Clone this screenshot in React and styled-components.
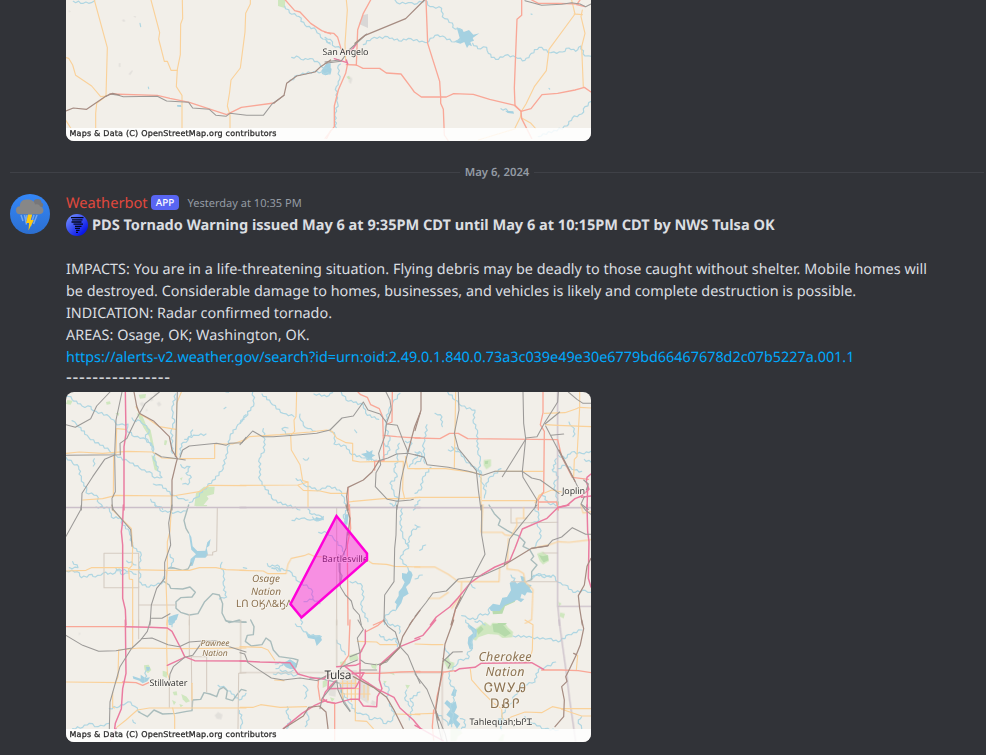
import React from "react";
import styled, { createGlobalStyle } from "styled-components";

const Global = createGlobalStyle`
  * { box-sizing: border-box; }
  html, body { margin: 0; background: #313338; }
  body {
    overflow: hidden;
    font-family: "Noto Sans", "Open Sans", sans-serif;
    text-rendering: geometricPrecision;
  }
`;

const Channel = styled.main`
  display: flex;
  flex-direction: column;
  width: 986px;
  height: 755px;
  overflow: hidden;
  background: #313338;
  color: #dbdee1;
`;

const Attachment = styled.figure`
  margin: 0 0 0 ${(p) => p.$indent || 0}px;
  width: 525px;
  height: ${(p) => p.$height}px;
  flex: none;
  overflow: hidden;
  border-radius: ${(p) => (p.$cut ? "0 0 8px 8px" : "8px")};
  svg { display: block; }
`;

const Divider = styled.div`
  display: flex;
  align-items: center;
  height: 16px;
  margin: 23px 2px 0 10px;
  color: #949ba4;
  font-size: 11.3px;
  font-weight: 600;
  line-height: 16px;
  white-space: nowrap;
  &::before, &::after {
    content: "";
    flex: 1;
    height: 1px;
    background: #3f4147;
  }
`;

const DateLabel = styled.span`
  width: 74px;
  padding-top: 1px;
  text-align: center;
`;

const Message = styled.article`
  display: flex;
  margin: 12px 0 0 10px;
`;

const Avatar = styled.svg`
  flex: none;
  width: 40px;
  height: 40px;
  margin: 2px 16px 0 0;
`;

const Body = styled.div`
  display: flex;
  flex-direction: column;
`;

const Header = styled.header`
  display: flex;
  align-items: center;
  height: 22px;
`;

const Author = styled.span`
  width: 85px;
  color: #e0483d;
  font-size: 14.65px;
  line-height: 22px;
`;

const AppTag = styled.span`
  width: 28px;
  height: 15px;
  border-radius: 4px;
  background: #5865f2;
  color: #fff;
  font-size: 9.8px;
  font-weight: 500;
  line-height: 15px;
  text-align: center;
  margin-top: -2px;
`;

const Time = styled.time`
  margin-left: 8.5px;
  padding-top: 1px;
  color: #949ba4;
  font-size: 11.05px;
  line-height: 22px;
`;

const Line = styled.div`
  display: flex;
  align-items: center;
  height: 22px;
  padding-top: 2px;
  font-size: 14.38px;
  line-height: 20px;
  white-space: nowrap;
  letter-spacing: ${(p) => p.$track || 0}px;
`;

const Title = styled(Line)`
  padding-top: 0;
  font-size: 14.55px;
  line-height: 22px;
  font-weight: 700;
  gap: 4px;
`;

const Link = styled.a`
  color: #00a8fc;
  text-decoration: none;
`;

const Dashes = styled(Line)`
  height: 24px;
  padding-top: 0;
  font-size: 18px;
  line-height: 19px;
  align-items: flex-start;
  letter-spacing: 0.76px;
`;

const KINDS = [
  ["town", { fill: "#dedcd8", opacity: 0.8 }],
  ["park", { fill: "#c9e5b7", opacity: 0.85 }],
  ["wood", { fill: "#b3d9a8", opacity: 0.9 }],
  ["lake", { fill: "#a5d1e1" }],
  ["stream", { fill: "none", stroke: "#afd6e2", strokeWidth: 3.6 }],
  ["river", { fill: "none", stroke: "#a9bcbc", strokeWidth: 4.2 }],
  ["edge", { fill: "none", stroke: "#d5cbc1", strokeWidth: 3.2 }],
  ["state", { fill: "none", stroke: "#cbbfc9", strokeWidth: 4 }],
  ["minor", { fill: "none", stroke: "#fad199", strokeWidth: 3.4 }],
  ["trunk", { fill: "none", stroke: "#f9a797", strokeWidth: 4 }],
  ["motor", { fill: "none", stroke: "#ea7ba0", strokeWidth: 4.4 }],
  ["rail", { fill: "none", stroke: "#9c9a98", strokeWidth: 3.2 }],
  ["mixed", { fill: "none", stroke: "#a68c82", strokeWidth: 3.7 }],
];

const parse = (s) => s.split(" ").map((p) => p.split(",").map(Number));

// Adds small alternating bends along a line so that streams meander.
function meander(s) {
  const pts = parse(s);
  const out = [pts[0]];
  let n = 0;
  for (let i = 1; i < pts.length; i++) {
    const [ax, ay] = pts[i - 1];
    const [bx, by] = pts[i];
    const len = Math.hypot(bx - ax, by - ay);
    const steps = Math.max(1, Math.round(len / 8));
    for (let k = 1; k < steps; k++) {
      n++;
      const t = k / steps;
      const off = (n % 2 ? 1 : -1) * (1.2 + ((n * 7) % 5) * 0.65);
      out.push([ax + (bx - ax) * t - ((by - ay) / len) * off, ay + (by - ay) * t + ((bx - ax) / len) * off]);
    }
    out.push([bx, by]);
  }
  return out.map((p) => p.map((v) => v.toFixed(1)).join(",")).join(" ");
}

const ANGELO = [
  {
    x: -6, y: 0,
    park: ["654,0 676,0 674,24 654,18"],
    lake: ["784,212 792,200 800,190 812,190 812,222 796,226 786,222", "351,315 363,315 365,321 352,320"],
    stream: ["674,18 688,38 718,50 734,74 768,90 782,112 810,128", "695,172 717,172 730,180 750,176 772,184 782,198 800,204", "810,222 770,214 712,226 686,246", "40,4 70,10 94,8 104,2", "240,70 242,80", "265,261 266,266"],
    town: ["186,60 192,58 196,64 190,66", "220,48 228,48 226,54", "206,222 216,210 218,214 210,226", "176,190 181,190 181,200 177,202", "26,30 32,34 28,38"],
    minor: ["103,0 142,143 138,288 122,290 95,258 47,226 38,195 26,175 18,173", "138,288 110,310 107,340 107,384", "273,0 299,98 296,117 313,184 322,184 333,211 352,211", "367,0 368,56 362,72 361,164 352,208 349,260 366,286 366,384", "571,0 571,12 557,40 555,96 541,204 513,240 509,276 502,318 510,345 510,384", "18,362 32,384"],
    trunk: ["676,0 704,32 720,36 752,70 785,92 812,102", "150,282 292,286 330,295 388,307 500,344 512,338 544,322 642,309", "812,392 800,415"],
    rail: ["138,290 150,282 175,286 190,290 292,289 320,303 386,307 398,324 448,328 468,346 498,349 510,340 560,346 610,346 636,312 672,286"],
    mixed: ["18,333 40,324 80,328 138,288 158,280 178,285", "642,309 672,286 680,250 710,228 765,216 782,200 812,180"],
  },
  {
    x: 259, y: 0,
    town: ["70,226 82,236 78,252 72,246"],
    park: ["64,230 72,228 76,236 70,238"],
    lake: ["395,82 412,88 416,96 432,90 445,104 463,100 443,114 447,122 436,126 441,139 432,135 426,144 418,126 406,131 390,126 404,114", "0,196 20,206 18,218 0,226", "540,332 565,334 567,341 548,339"],
    stream: ["210,0 224,12 250,8 268,13 300,0 316,20 350,25 352,50 382,69 383,82 408,89", "115,134 140,116 188,110 222,123 258,116 300,127 312,124 330,106 360,112 388,126 406,120", "443,130 458,146 485,142 490,160 512,178 540,166 572,172 600,181 614,166 642,142 678,158 712,156 732,144 752,154 768,138 780,168 799,169", "0,112 16,118 22,136 48,146", "46,192 38,204 44,238 34,260 38,310 30,340 34,384", "799,304 780,320 770,342 742,354 726,378 640,410", "528,326 548,332", "618,42 621,43", "672,265 674,267", "4,120 16,132"],
    minor: ["64,0 67,30 60,132 62,184", "740,0 750,42 672,148 664,212 628,260 603,312 588,336 586,352 570,384", "772,30 768,50 780,100 770,140 775,262", "747,42 772,44", "590,354 618,370 632,386", "572,386 460,420"],
    trunk: ["137,0 115,40 98,90 94,196", "0,97 26,100 38,112 48,146 60,158", "303,0 308,130 344,244 347,292 347,310 355,328 358,405 370,423", "590,0 590,46 576,58 568,264 570,318 588,334 590,356 620,415", "64,194 94,195 114,205 164,205 184,219 228,222 258,262 268,276 289,291 364,291 386,281 445,283 494,298 570,316 588,334 618,326 651,284 698,280 750,270 778,262 798,276", "68,190 62,220 40,270 28,318 28,380 0,415", "620,0 640,10 700,10 760,12", "765,0 755,14 780,20"],
    motor: ["28,176 66,188", "94,132 82,148 72,158", "64,180 68,192"],
    rail: ["0,190 48,184 72,150 125,102", "600,2 650,16 710,13 740,8 765,12 782,20 798,12", "0,186 42,180"],
    mixed: ["298,0 242,56 120,106 90,130"],
  },
];

const TULSA = [
  {
    x: 0, y: -2,
    town: ["220,40 230,36 236,44 228,50", "250,24 258,20 262,30 254,34", "272,40 280,34 286,44 278,50", "240,56 246,60 240,66", "262,10 276,8 270,18"],
    park: ["385,348 390,310 414,290 446,290 444,312 422,318 428,326 412,346", "212,70 228,74 240,104 254,120 264,170 258,176 250,140 232,112", "4,30 20,32 14,44 0,42", "296,150 304,152 300,166 294,164", "342,265 350,262 346,272", "256,196 268,200 276,244 266,240", "218,14 240,12 238,24 222,26", "120,36 132,34 134,42 122,44", "148,70 160,68 158,78"],
    stream: ["0,12 18,28 48,48 75,50 82,62 130,80 148,98 160,104 186,102 182,120 205,140 240,148 262,170 264,210 288,262 266,264 258,250 220,234 186,214 150,196 130,182 68,142 32,104 18,92", "0,202 20,220 38,230 46,266 62,300 60,308 92,316 100,340 110,350", "198,84 210,95 222,92 234,104 250,120 238,145 256,160 262,186", "329,12 318,50 320,76 326,96 316,120 318,170 320,190", "380,120 366,150 346,162 344,200", "356,148 390,136 420,132", "540,74 512,110 492,140 484,180 472,236 424,290 392,322 370,338", "262,282 280,284 322,316 346,326 366,330", "344,224 356,235 372,230 360,250 376,262 366,284 350,282", "254,328 268,346 280,350 290,358", "85,206 82,228", "474,56 480,52", "480,6 500,0"],
    minor: ["152,116 178,118", "152,116 150,190 143,196 142,320", "0,190 40,186 110,190 184,184 260,186 288,204 330,206", "210,50 224,74 246,86 280,110 330,118", "340,206 446,205 446,162 500,162 540,148", "50,330 110,326 150,316 320,318 404,304 430,286 540,287", "346,6 332,40 332,202", "316,318 316,360"],
    motor: ["178,6 180,130 174,170 174,360"],
    rail: ["132,6 92,48 74,86 28,112 0,104", "0,196 163,194 162,160 182,146 208,92 238,40 280,6", "168,6 150,90 146,196", "146,196 148,305 138,325 139,360", "144,196 116,208 80,260 48,310 46,360", "334,6 328,200", "268,190 286,200 334,206 358,210", "540,142 528,158 490,160 480,166 452,160 370,168 350,180 342,202", "318,320 318,360"],
    mixed: ["204,6 212,48 220,70 264,94 310,140 318,180 334,206 330,220 318,270 318,318"],
    state: ["0,353 540,353"],
  },
  {
    x: 174, y: -2,
    lake: ["363,192 380,188 378,180 388,186 398,180 396,192 406,196 396,202 396,214 390,206 380,212 378,202"],
    stream: ["38,6 42,40 18,80 0,98", "66,12 92,38 130,70 162,80", "180,72 182,90 190,106 204,116 226,124", "222,12 260,20 278,8", "304,6 318,30 370,44 382,76 416,88", "70,116 74,180 58,206 60,270 100,330 180,360", "270,118 285,136 282,162 318,168 336,194 372,204 410,210", "152,140 128,120 126,116 144,114", "168,266 186,276 200,290 240,300 262,288 298,300 314,330 322,360", "190,206 202,210 206,204", "344,120 350,128", "480,10 458,38 446,60 436,110 450,150 438,170", "432,160 450,180 430,200 424,212", "478,160 468,188 474,210 462,236 472,260 450,280 462,310 476,330 460,350 450,340", "540,188 524,206 508,230", "496,154 516,160 508,176 500,186", "520,360 540,330"],
    minor: ["170,6 168,80 162,90 164,124 152,136 154,180 180,224 188,272 204,276 204,350", "0,160 28,140 120,134 210,126 260,120 276,124 290,144 318,158 338,160 338,212 360,216 400,215 490,214 488,300 494,326 430,326 340,334", "0,286 174,285 204,276", "174,286 190,301 240,303 272,310 320,310", "326,336 340,334", "540,322 490,326", "496,200 504,236 540,236"],
    trunk: ["354,6 362,14 382,22 392,44 418,56 428,80 432,212 404,214 404,240", "457,6 456,96 442,102", "430,136 470,140 500,142 540,144", "324,292 326,360"],
    rail: ["0,164 38,123 68,140 100,140 180,134 230,130 270,120 306,84 340,78 370,36 384,60 420,72 440,98 434,140 416,190 422,224 408,248 406,290 442,328 472,334 512,330 520,328", "438,6 450,30 454,60 440,98", "442,102 472,106 488,148 504,186 490,240 482,276 476,330 470,360", "416,212 444,204 470,192 504,190 540,198"],
    mixed: ["540,70 524,110 504,185", "416,214 396,246 370,270 324,292 320,320 324,360"],
    state: ["0,353 540,353"],
  },
  {
    x: 349, y: -2,
    park: ["206,210 228,208 228,228 214,238 206,226"],
    wood: ["210,214 220,212 218,222 210,222", "424,336 432,334 432,344 426,346"],
    stream: ["98,6 120,30 140,48 180,60 174,90 188,130 188,184 196,210 192,244 202,280 212,310 208,324", "60,70 76,74 82,110", "36,104 26,160 28,200 0,222", "100,180 130,184 150,210 184,236 200,250", "258,236 220,266 214,290", "48,232 24,260 18,300 0,310", "0,186 20,190 30,220", "462,96 472,110 480,132 474,140", "430,196 450,206 470,186 500,190 528,184", "430,236 450,226 478,240 500,244", "412,238 430,260 416,280 424,310 430,344 400,340 380,310", "110,170 128,180", "424,206 412,240", "528,216 508,208"],
    minor: ["122,6 118,232", "0,236 92,236 180,248 198,254 198,360", "240,244 322,244 384,244", "0,322 196,322", "202,332 366,332 372,316 410,300 440,306", "388,70 450,68 480,58 494,52 528,54", "392,104 428,106 528,110", "494,6 494,52 486,200 478,208 476,262", "360,338 372,320 386,306"],
    trunk: ["0,144 75,146 104,130 130,130 158,146 428,149 440,200 472,262 520,268", "384,6 384,68 376,104 388,124 386,306 370,330 370,360", "372,336 425,336 430,360"],
    motor: ["528,252 516,262 514,276 522,298 500,318 480,326 456,346 430,352", "518,290 516,360", "500,322 528,318"],
    rail: ["130,6 132,60 118,130 130,176 184,242 190,300 198,360", "0,194 28,202 36,224 100,232 160,244 204,256 240,244 322,244 350,264 376,270 432,310", "324,6 326,100 332,146 322,244 324,262 366,330 360,352", "332,144 366,140 388,100 428,36 430,6", "332,148 262,260", "390,102 434,66", "408,136 446,132", "392,108 434,188 480,274 490,294", "460,6 486,28 504,40 528,40", "506,270 520,282 514,300", "508,320 498,342 520,358"],
    mixed: ["18,6 18,60 0,122", "432,180 480,274"],
    state: ["0,353 540,353", "428,6 428,360"],
  },
  {
    x: 0, y: 113,
    lake: ["368,82 376,96 380,124 394,138 418,137 424,112 434,102 430,122 422,128 426,150 418,158 388,158 380,182 370,184 374,162 390,148 376,134", "308,336 324,330 338,326 332,344 322,350 318,360 308,360"],
    stream: ["90,6 130,10 136,36 164,38 170,60 190,80 200,120 226,150 218,182 224,216 218,230 242,246 270,240 292,230 294,214", "0,198 34,200 46,218 78,208 88,216 112,204 140,208 160,192 190,198 210,208", "20,170 36,188 10,188", "150,190 170,210 188,204", "182,168 210,180", "266,0 290,20 328,22 360,18", "312,148 322,170 310,188 326,190", "468,172 464,190 474,206 472,240 482,276 460,282"],
    river: ["368,0 354,46 360,70 368,84", "305,190 320,188 350,196 366,192 376,174", "294,230 310,240 314,250 350,252 372,246 388,262 378,276 344,278 330,290 330,310 344,322 370,330 396,326 416,290 440,266 460,270 470,296 468,324 480,348 500,350 540,352"],
    edge: ["114,145 218,145 218,248 114,248 114,145", "454,8 452,138 440,142 440,150 422,150", "218,300 328,300", "218,245 218,360", "370,328 370,360", "302,196 302,236"],
    minor: ["0,198 60,196 76,188 184,188 196,194 300,196 370,196 400,188 450,188 480,194 540,196", "316,10 312,78 304,110 304,190 300,232 304,340 302,360", "138,0 140,15 196,70 200,130 198,182 188,192 190,222 200,224 200,360"],
    motor: ["172,0 170,50 166,80 170,120 170,280 178,314 180,360"],
    rail: ["46,0 44,14 0,94", "138,0 142,14 194,74 198,124", "318,0 314,20 308,54 314,120 296,172 296,220 272,250 256,300 252,360", "254,340 288,340 312,326"],
    state: ["0,7 540,7"],
    park: ["388,0 424,0 422,4 390,4"],
  },
  {
    x: 174, y: 113,
    lake: ["486,204 500,206 506,196 514,200 518,210 510,234 498,246 506,266 490,276 484,294 474,308 466,320 470,298 464,292 476,272 476,260 486,248 494,232 486,220", "314,28 326,28 322,60 314,56", "228,36 240,40 252,32 250,44 238,48 226,44"],
    stream: ["156,46 184,40 202,44 218,44 250,44 236,30 216,28 204,12", "218,36 230,48 248,42", "236,82 262,84 280,100 308,130 314,150", "82,176 90,186 112,180 122,198 96,190", "96,188 140,196 156,204 176,230 214,252 218,284 192,290", "330,230 362,236 372,276 364,290 368,320 384,350", "184,338 184,358", "486,10 480,50 488,90 506,130 490,140 480,160 498,180 506,198", "540,66 520,72 508,96 504,124", "466,316 452,320 436,330 434,358", "330,0 310,30 318,70", "218,282 240,296", "10,188 20,190"],
    river: ["296,150 298,200 306,212 300,240"],
    edge: ["290,8 290,360"],
    minor: ["0,196 70,198 84,206 138,206 144,178 154,160 192,152 206,146 222,154 380,164 398,176 440,178 464,184 540,186"],
    trunk: ["328,0 332,70 322,120 324,360", "400,360 432,346"],
    rail: ["470,0 468,90 464,130 462,230 434,270 432,350", "322,80 318,130 300,170 300,244 316,270 334,288 340,310 358,330 364,360"],
    mixed: ["540,316 508,360", "318,0 330,40 324,90"],
    state: ["0,7 540,7"],
  },
  {
    x: 349, y: 113,
    park: ["366,146 384,140 400,152 402,168 384,178 374,168", "430,290 440,296 432,304", "436,322 450,326 446,340 434,334"],
    wood: ["372,150 384,154 398,150 400,166 386,172 380,164", "262,280 296,276 300,290 270,304 262,326 234,328 232,318 258,302", "250,354 276,354 270,360 244,360"],
    lake: ["284,234 298,226 306,236 320,228 316,212 328,216 334,238 350,240 344,250 354,264 336,262 330,272 320,266 316,280 328,282 318,292 306,284 292,292 270,300 254,318 228,318 222,308 234,296 254,300 262,278 276,276 288,256"],
    stream: ["288,232 300,220 288,210", "346,222 370,206 388,218 414,210 430,232 450,240 474,262 510,256 528,262", "224,308 218,330 196,326 180,344 158,340 140,332", "180,350 200,350 210,360", "366,56 374,70 376,100 364,114 356,130", "0,222 22,210", "14,136 32,120", "0,60 10,66", "168,238 180,250", "358,10 372,30 368,50 350,54", "350,214 380,210 410,216"],
    river: ["222,0 238,26 256,44 250,60 276,76 298,88 310,92 330,112 324,124 344,134 356,154 348,164 366,180 350,200 350,224 334,230"],
    edge: ["288,8 288,54 428,52", "384,144 428,144", "290,230 428,230"],
    minor: ["204,0 198,82 262,82 270,90 290,92 306,60 304,40 336,40", "326,8 326,40", "280,100 278,160 276,192 310,196 326,206 330,230 354,254 350,344 330,356", "0,186 60,186 100,208 130,230 252,230 254,188", "140,230 138,270 110,310", "40,280 74,280 100,262", "350,130 400,120 430,110 462,112 528,104", "498,0 504,24 528,20"],
    trunk: ["138,276 122,310 110,360"],
    motor: ["462,0 428,8 396,40 322,72 300,130 284,168 240,186 202,208 168,232 128,280 104,306 64,336 46,360", "516,0 518,80 522,110 520,220 528,246"],
    rail: ["200,0 200,90 210,148 168,228 140,280 124,310", "366,0 304,76 284,102 268,182 200,212 156,218 130,222 94,258 54,264 32,294 0,334", "350,130 396,124 412,106 440,96 472,68 512,88 528,88", "500,0 512,16 528,28"],
    mixed: ["528,160 516,184 508,240 490,272 494,310 502,360", "268,180 350,130 400,122", "138,276 122,310 108,360"],
    state: ["0,7 540,7", "428,8 428,300 434,360", "428,304 528,304"],
  },
  {
    x: 0, y: 228,
    town: ["446,286 456,276 470,284 466,298 452,296", "38,38 44,40 40,46"],
    park: ["234,136 248,134 256,150 246,160 236,150", "290,152 304,156 302,174 290,168", "320,216 332,214 334,226 324,226", "346,222 362,230 372,244 360,248 350,238", "318,240 330,246 324,256", "340,252 352,256 344,262"],
    lake: ["200,168 224,176 224,164 238,174 252,172 244,184 230,190 220,182 202,176", "306,0 328,0 326,8 314,16", "240,140 252,142 250,152 242,152"],
    stream: ["130,266 160,260 180,250 194,246 208,260 222,276", "20,326 50,322 70,310 96,320 130,310", "520,272 528,300 524,326", "456,196 480,206 520,240 540,220", "200,300 208,310", "240,152 236,184", "308,0 318,20"],
    river: ["478,0 490,8 520,0 526,6 540,6", "218,276 244,290 264,270 290,282 330,280 362,274 378,272 380,240 404,238 414,218 432,222 452,230 460,208 472,202 484,212 480,236 500,242 516,220 526,208 540,212"],
    edge: ["218,0 218,56", "370,0 370,110 422,110 422,216", "540,158 518,160 516,326", "376,108 378,264", "310,176 310,262"],
    minor: ["200,0 200,86", "304,0 302,78 304,160 310,176", "0,186 170,188", "158,90 220,84 340,86 540,84", "158,90 156,170 148,190", "152,322 180,300 214,270 250,264 540,264", "320,264 326,290 326,326", "378,190 378,240", "140,216 140,262 146,264"],
    trunk: ["0,20 178,20", "170,186 210,188 230,196 248,188"],
    motor: ["178,0 180,160 170,206 166,266 148,310 146,326", "178,20 250,22 304,24 318,34 344,84 356,110 386,122 540,123", "356,112 304,136", "150,326 134,360"],
    rail: ["0,46 50,76 98,94 150,92 198,84 224,60 244,34 254,0", "196,86 162,140 132,246 130,326", "226,56 258,54 306,74 340,80 370,66 400,64 450,62 490,80 540,96", "410,64 380,106 356,112 322,140 312,162 310,180"],
  },
  {
    x: 174, y: 228,
    town: ["300,150 350,150 350,200 300,200", "270,190 290,190 286,230 266,226", "356,180 390,200 384,250 360,236", "396,240 408,246 404,258 392,252"],
    park: ["326,106 350,100 356,118 330,124", "392,134 412,130 408,148 396,144", "248,184 262,178 260,198 248,204", "496,194 510,196 502,208", "356,92 366,84 368,96", "300,126 318,122 316,134 302,136", "448,160 460,156 464,166", "430,182 440,184 434,192", "270,232 284,236 276,246"],
    lake: ["126,130 140,124 150,118 172,132 168,146 152,148 138,142", "196,34 212,46 240,46 246,60 230,78 224,58 204,54"],
    stream: ["166,12 186,28 204,44 244,50", "100,162 130,160 168,166 178,160", "106,132 118,126 128,136 108,146", "290,60 302,84 316,104", "194,236 204,210 190,196", "140,326 152,300 140,280 142,260", "540,216 510,236 520,256 508,300", "300,210 330,250 352,280 378,282 388,298 420,294 430,310 458,300 462,276 448,250", "418,44 440,62 470,56 472,80", "440,0 450,16 480,20 478,40", "200,272 206,290 196,320", "432,190 448,210 440,230", "500,210 494,234 510,260", "120,150 144,158 160,150"],
    river: ["32,0 42,20 40,44 22,46 16,64 34,78 66,74 78,54 92,64 100,90 118,110 160,116 174,120 168,140", "210,176 238,174 262,180 300,190 310,240 330,272"],
    edge: ["0,158 540,158", "2,0 2,158", "290,0 290,140"],
    minor: ["0,80 64,82 84,90 104,120", "0,262 40,262 62,254 120,262 200,260", "352,64 410,66 420,74 470,74", "346,210 346,302 380,304 400,326", "540,284 464,282", "104,180 132,182", "308,180 308,236", "322,184 322,232", "334,180 334,244", "346,176 346,240", "384,186 384,240", "300,206 358,206", "302,222 390,222", "300,190 350,190", "372,196 372,232"],
    trunk: ["330,0 326,106 302,140", "328,160 420,160 480,156 540,154", "376,36 414,16 432,0", "236,176 234,200 240,240 284,250 284,360"],
    motor: ["0,123 60,126 150,128 174,162 210,172 236,176 252,176 262,164", "376,30 376,70 360,100 360,160 358,240", "540,56 480,80 420,134 418,180 426,206 412,230 410,260 370,258 356,238 330,238 286,250 262,246 248,236 256,216 286,182", "290,140 346,136 360,130", "130,326 186,280 224,256 260,240", "316,140 358,172 410,206 462,232 480,264 520,300 540,324", "266,164 264,206 346,204 372,158 328,162"],
    rail: ["0,98 14,102 24,128 60,152 94,174 130,180 180,174 234,182", "234,180 258,168 280,160", "354,0 370,28 352,54 360,98 330,110", "430,0 444,20 466,36 480,80 504,106 522,150 540,190", "360,150 410,150", "290,180 294,210 312,250 330,274", "240,266 246,236 290,182", "412,134 440,126 480,80", "286,166 306,140 332,128 352,120", "362,120 376,130 408,134"],
    mixed: ["518,0 488,50 478,84 446,116 420,136", "130,326 190,288 206,262 238,258 258,276 264,326", "340,170 400,202 440,232 462,270 490,326"],
  },
  {
    x: 349, y: 228,
    park: ["180,28 210,6 226,18 232,8 270,10 278,22 294,36 292,52 262,54 250,44 218,42 190,52 182,62 168,54 180,40", "86,124 100,108 104,124 118,128 116,144 98,148", "106,328 134,326 142,340 128,350 124,364 106,364", "248,362 262,342 268,344 264,364"],
    wood: ["184,30 198,18 206,28 190,44", "232,12 262,12 274,26 288,40 270,50 250,38 236,36"],
    lake: ["156,8 166,16 186,30 184,50 172,56 174,88 164,88 158,70 160,52 174,40", "88,250 96,240 110,252 122,244 126,262 118,278 132,288 124,300 136,312 126,326 116,310 98,316 106,294 94,284 106,268", "116,206 126,210 120,230 108,226", "248,296 262,294 270,298 260,318 252,312"],
    stream: ["152,0 160,20 180,36 172,60 170,90 158,96 160,116 130,120 122,138 102,160 104,190 120,210 118,240 106,260 114,290 110,320", "294,48 350,52 400,56 430,66 460,44 500,30", "422,126 390,142 370,148 360,186 326,194 300,226 290,250 262,280 260,330", "66,280 90,300 100,316", "90,84 100,98 100,110", "500,326 490,300 500,290", "330,290 350,310 390,326 430,330", "130,330 150,322 150,300 136,296"],
    edge: ["0,158 80,158", "82,130 82,360"],
    minor: ["330,0 354,14 352,90 344,120 328,128", "166,148 170,180 200,214 234,248 260,266 262,300", "272,300 290,290 330,276 380,278 412,260 440,266 528,266", "488,106 484,150", "440,268 500,288 528,288", "0,72 50,74 84,74", "0,282 56,280"],
    trunk: ["0,156 90,156 120,152", "380,150 440,150 490,152 528,158", "56,270 52,320 56,360", "84,158 66,230 60,280"],
    motor: ["120,154 134,146 180,142 198,130 350,128 386,148", "62,0 24,46 0,56", "0,316 50,344 84,362"],
    rail: ["0,162 36,208 60,268 90,340 96,364", "84,124 114,96 142,95", "84,116 106,132 100,144", "62,276 66,300 80,360"],
    mixed: ["116,0 90,72 80,160 62,270 70,300", "500,0 506,26 496,74 484,104 476,100", "484,104 464,146 452,170 456,184 440,200 448,240 446,290 420,320"],
    state: ["432,0 456,174 464,240 482,364"],
  },
];

const AREAS = new Set(["town", "park", "wood", "lake"]);

function MapLines({ tiles }) {
  return KINDS.map(([kind, look]) => (
    <g key={kind} {...look} strokeLinejoin="round" strokeLinecap="round">
      {tiles.map((t, i) => (
        <g key={i} transform={`translate(${t.x} ${t.y}) scale(0.33333)`}>
          {(t[kind] || []).map((s, k) =>
            AREAS.has(kind) ? (
              <polygon key={k} points={s} />
            ) : (
              <polyline key={k} points={kind === "stream" ? meander(s) : s} />
            )
          )}
        </g>
      ))}
    </g>
  ));
}

const Label = styled.text`
  font-family: "Noto Sans", "DejaVu Sans", sans-serif;
  font-size: ${(p) => p.$size || 9}px;
  font-style: ${(p) => (p.$nation ? "italic" : "normal")};
  fill: ${(p) => (p.$nation || p.$script ? "#8d7352" : "#3c3c3c")};
  stroke: #f7f4ee;
  stroke-width: ${(p) => (p.$size > 11 ? 2.4 : 2)}px;
  stroke-opacity: 0.75;
  stroke-linejoin: round;
  paint-order: stroke;
  text-anchor: middle;
`;

const Credit = styled.text`
  font-family: "DejaVu Sans", sans-serif;
  font-size: 8px;
  fill: #2a2a2a;
  stroke: #2a2a2a;
  stroke-width: 0.28px;
`;

function Attribution({ y }) {
  return (
    <>
      <rect x="0" y={y} width="525" height="13" fill="#fff" opacity="0.84" />
      <Credit x="3.500" y={y + 8.2} textLength="207">Maps &amp; Data (C) OpenStreetMap.org contributors</Credit>
    </>
  );
}

function SanAngeloMap() {
  return (
    <svg width="525" height="141" viewBox="0 0 525 141">
      <rect width="525" height="141" fill="#f2efe9" />
      <path d="M297 15L302 14V28L293 24Z" fill="#d9d7d6" />
      <MapLines tiles={ANGELO} />
      <Label x="279.500" y="54.500" textLength="46">San Angelo</Label>
      <Attribution y={128} />
    </svg>
  );
}

function TulsaMap() {
  return (
    <svg width="525" height="350" viewBox="0 0 525 350">
      <rect width="525" height="350" fill="#f2efe9" />
      <MapLines tiles={TULSA} />
      <Label x="507.500" y="102" textLength="23">Joplin</Label>
      <Label x="279" y="169.500" textLength="46">Bartlesville</Label>
      <Label $nation $size={10} x="200" y="190">Osage</Label>
      <Label $nation $size={10} x="200" y="202.500">Nation</Label>
      <Label $script $size={10} x="198" y="215" textLength="56">ԼՈ OӃΛ&amp;ӃΛ</Label>
      <Label $nation $size={8.5} x="149" y="254">Pawnee</Label>
      <Label $nation $size={8.5} x="149" y="264">Nation</Label>
      <Label x="102.500" y="294" textLength="38">Stillwater</Label>
      <Label $size={12} x="272" y="286.500" textLength="27">Tulsa</Label>
      <Label $nation $size={12.5} x="439" y="268.500" textLength="53">Cherokee</Label>
      <Label $nation $size={12.5} x="439" y="284" textLength="39">Nation</Label>
      <Label $script $size={13} x="439" y="300" textLength="42">ᏣᎳᎩᎯ</Label>
      <Label $script $size={13} x="439" y="315.500" textLength="29">ᎠᏰᎵ</Label>
      <Label x="435" y="333" textLength="63">Tahlequah;ᏏᎵᏆ</Label>
      <polygon points="270.500,124 301,161.500 301,168 235.500,225.500 224.500,212" fill="#ff00d8" fillOpacity="0.4" stroke="#ff00d8" strokeWidth="2.500" />
      <Attribution y={337} />
    </svg>
  );
}

function WeatherAvatar() {
  return (
    <Avatar viewBox="0 0 40 40">
      <defs>
        <linearGradient id="sky" x1="0" y1="0" x2="0" y2="1">
          <stop offset="0" stopColor="#3487f8" />
          <stop offset="1" stopColor="#2c6fd0" />
        </linearGradient>
      </defs>
      <circle cx="20" cy="20" r="20" fill="url(#sky)" />
      <path d="M11 21l2 6M14.500 21l2 9.500M17 21l-1 5M24 21l-3.500 11M27 21l-3.500 9" stroke="#76a8ee" strokeWidth="1.500" />
      <circle cx="27.500" cy="9" r="4" fill="#77777a" />
      <circle cx="31" cy="11" r="2.300" fill="#77777a" />
      <path d="M10 20.300a4 4 0 0 1 0-8C9.500 8 13 5 17 5.500C22 5 25 8 25 10.500C28 9.500 30 11 30 12.600C34.500 13 35 20 29.500 20.300Z" fill="#878787" />
      <path d="M18 20.500h4.300L20.800 26h3L18.500 36.500l.6-7.500h-3Z" fill="#ffc90e" />
    </Avatar>
  );
}

const Emoji = styled.svg`
  flex: none;
  width: 22px;
  height: 22px;
`;

function TornadoEmoji() {
  return (
    <Emoji viewBox="0 0 22 22">
      <defs>
        <linearGradient id="storm" x1="0.150" y1="0.150" x2="0.800" y2="0.850">
          <stop offset="0" stopColor="#6781fb" />
          <stop offset="1" stopColor="#0816e8" />
        </linearGradient>
      </defs>
      <circle cx="11" cy="11" r="11" fill="url(#storm)" />
      <path d="M5 3.700h12.500M6 5.900h10.500M5.500 8h10M7.500 10.200h9.500M9 12.300h6.500M9 14.400h5M10 16.400h3.500M10 18.300h2" stroke="#03071c" strokeWidth="1.300" />
    </Emoji>
  );
}

export default function App() {
  return (
    <>
      <Global />
      <Channel>
        <Attachment $height={141} $indent={66} $cut><SanAngeloMap /></Attachment>
        <Divider><DateLabel>May 6, 2024</DateLabel></Divider>
        <Message>
          <WeatherAvatar />
          <Body>
            <Header>
              <Author>Weatherbot</Author>
              <AppTag>APP</AppTag>
              <Time>Yesterday at 10:35 PM</Time>
            </Header>
            <Title><TornadoEmoji /><span>PDS Tornado Warning issued May 6 at 9:35PM CDT until May 6 at 10:15PM CDT by NWS Tulsa OK</span></Title>
            <Line />
            <Line $track={0.04}>IMPACTS: You are in a life-threatening situation. Flying debris may be deadly to those caught without shelter. Mobile homes will</Line>
            <Line>be destroyed. Considerable damage to homes, businesses, and vehicles is likely and complete destruction is possible.</Line>
            <Line>INDICATION: Radar confirmed tornado.</Line>
            <Line $track={0.05}>AREAS: Osage, OK; Washington, OK.</Line>
            <Line><Link>https://alerts-v2.weather.gov/search?id=urn:oid:2.49.0.1.840.0.73a3c039e49e30e6779bd66467678d2c07b5227a.001.1</Link></Line>
            <Dashes>----------------</Dashes>
            <Attachment $height={350}><TulsaMap /></Attachment>
          </Body>
        </Message>
      </Channel>
    </>
  );
}
